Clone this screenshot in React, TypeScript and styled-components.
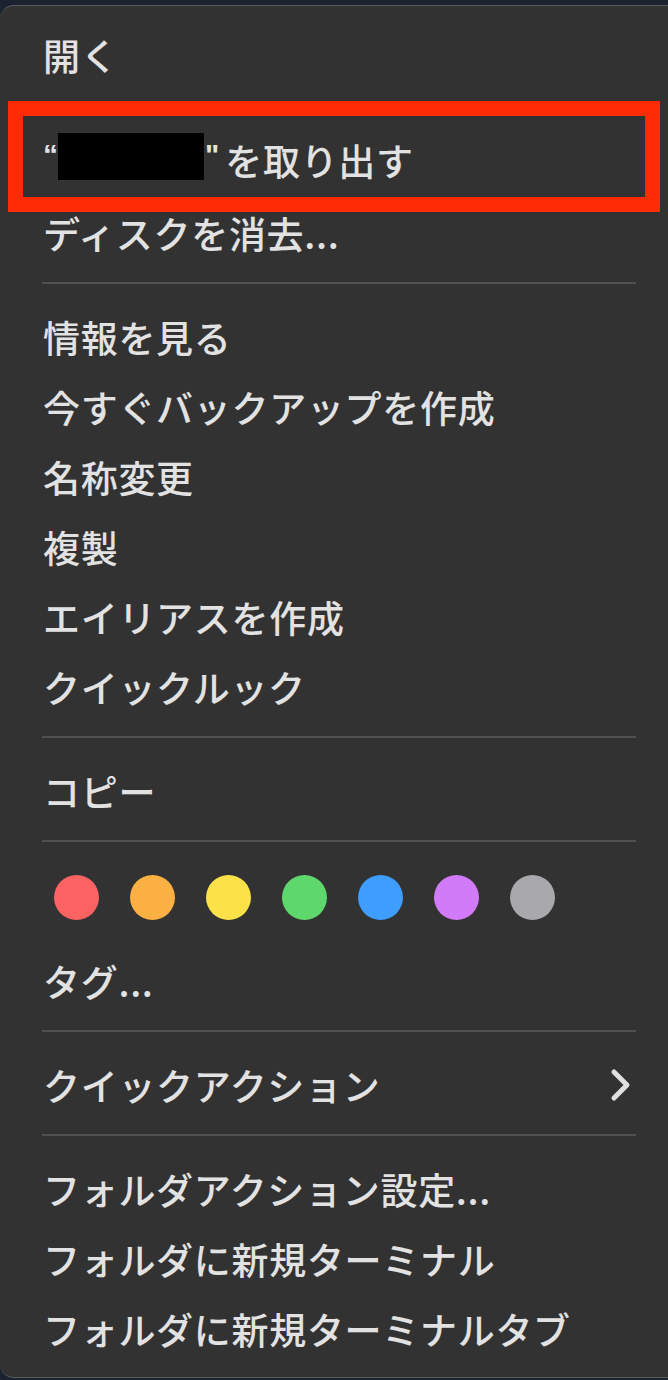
import styled, { createGlobalStyle } from "styled-components";

const GlobalStyle = createGlobalStyle`
  html, body {
    margin: 0;
    padding: 0;
    background-color: #1b2330;
    overflow: hidden;
  }

  body {
    font-family: "Noto Sans CJK JP", "Noto Sans", sans-serif;
  }
`;

const TAG_COLORS = ["#fb6262", "#fbb043", "#fde148", "#5ed86c", "#3f9dfe", "#d27bf8", "#a9a9ad"];

function ChevronIcon() {
  return (
    <svg width="22" height="34" viewBox="0 0 22 34" aria-hidden>
      <path d="M4 4 L17 17 L4 30" fill="none" stroke="#e0e0e0" strokeWidth="5" strokeLinecap="round" strokeLinejoin="round" />
    </svg>
  );
}

export default function App() {
  return (
    <>
      <GlobalStyle />
      <Menu>
        <Item>開く</Item>
        <EjectItem>
          <RedFrame />
          <Quote>“</Quote>
          <Redaction />
          <Quote>"</Quote>
          <EjectLabel>を取り出す</EjectLabel>
        </EjectItem>
        <Item>ディスクを消去...</Item>
        <Separator />
        <Item>情報を見る</Item>
        <Item>今すぐバックアップを作成</Item>
        <Item>名称変更</Item>
        <Item>複製</Item>
        <Item>エイリアスを作成</Item>
        <Item>クイックルック</Item>
        <Separator />
        <Item>コピー</Item>
        <Separator />
        <TagDots>
          {TAG_COLORS.map((color) => (
            <Dot key={color} $color={color} />
          ))}
        </TagDots>
        <Item>タグ...</Item>
        <Separator />
        <SubmenuItem>
          <span>クイックアクション</span>
          <ChevronIcon />
        </SubmenuItem>
        <Separator />
        <Item>フォルダアクション設定...</Item>
        <Item>フォルダに新規ターミナル</Item>
        <Item>フォルダに新規ターミナルタブ</Item>
      </Menu>
    </>
  );
}

const Menu = styled.div`
  display: flex;
  flex-direction: column;
  margin-top: 5px;
  padding: 14px 0 13px;
  background-color: #323232;
  border-top: 1px solid #5b5b5b;
  border-bottom: 1px solid #5b5b5b;
  border-radius: 14px 0 0 14px;
  color: #e2e2e2;
`;

const Item = styled.div`
  display: flex;
  align-items: center;
  height: 70px;
  padding: 0 36px 0 43px;
  font-size: 37px;
  font-weight: 500;
  letter-spacing: 0.7px;
  white-space: nowrap;
`;

const EjectItem = styled(Item)`
  position: relative;
  margin: 35px 0 3px;
`;

const RedFrame = styled.div`
  position: absolute;
  top: -24px;
  bottom: -17px;
  left: 8px;
  right: 8px;
  border: 15px solid #ff2a06;
  pointer-events: none;
`;

const Quote = styled.span`
  font-family: "Liberation Sans", sans-serif;
  font-size: 30px;
  font-weight: 700;
  letter-spacing: 0;
  margin-top: -10px;
`;

const Redaction = styled.span`
  display: inline-block;
  width: 146px;
  height: 47px;
  margin: -8px 1px 0 0;
  background-color: #000;
`;

const EjectLabel = styled.span`
  margin-left: 6px;
`;

const SubmenuItem = styled(Item)`
  justify-content: space-between;
`;

const Separator = styled.hr`
  height: 2px;
  margin: 14px 32px 18px 42px;
  border: none;
  background-color: #505050;
`;

const TagDots = styled.div`
  display: flex;
  gap: 31px;
  padding: 15px 0 26px 54px;
`;

const Dot = styled.span<{ $color: string }>`
  width: 45px;
  height: 45px;
  border-radius: 50%;
  background-color: ${({ $color }) => $color};
`;
